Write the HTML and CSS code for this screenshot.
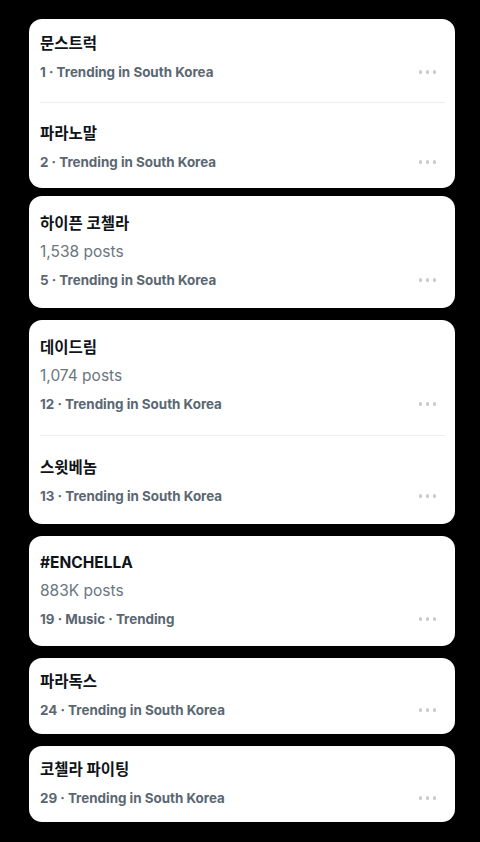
FILE: index.html
```html
<!DOCTYPE html>
<html lang="ko">

<head>
  <meta charset="UTF-8">
  <meta name="viewport" content="width=device-width, initial-scale=1.0">
  <title>Trends</title>
  <link rel="stylesheet" href="styles.css">
</head>

<body>
  <div class="trend-list">

    <div class="card pair">
      <div class="trend">
        <div class="trend-title">문스트럭</div>
        <div class="trend-meta">
          <span>1 · Trending in South Korea</span>
          <span class="more"><i></i><i></i><i></i></span>
        </div>
      </div>
      <div class="trend">
        <div class="trend-title">파라노말</div>
        <div class="trend-meta">
          <span>2 · Trending in South Korea</span>
          <span class="more"><i></i><i></i><i></i></span>
        </div>
      </div>
    </div>

    <div class="card">
      <div class="trend">
        <div class="trend-title">하이픈 코첼라</div>
        <div class="trend-posts">1,538 posts</div>
        <div class="trend-meta">
          <span>5 · Trending in South Korea</span>
          <span class="more"><i></i><i></i><i></i></span>
        </div>
      </div>
    </div>

    <div class="card loose">
      <div class="trend">
        <div class="trend-title">데이드림</div>
        <div class="trend-posts">1,074 posts</div>
        <div class="trend-meta">
          <span>12 · Trending in South Korea</span>
          <span class="more"><i></i><i></i><i></i></span>
        </div>
      </div>
      <div class="trend">
        <div class="trend-title">스윗베놈</div>
        <div class="trend-meta">
          <span>13 · Trending in South Korea</span>
          <span class="more"><i></i><i></i><i></i></span>
        </div>
      </div>
    </div>

    <div class="card snug">
      <div class="trend">
        <div class="trend-title">#ENCHELLA</div>
        <div class="trend-posts">883K posts</div>
        <div class="trend-meta">
          <span>19 · Music · Trending</span>
          <span class="more"><i></i><i></i><i></i></span>
        </div>
      </div>
    </div>

    <div class="card compact">
      <div class="trend">
        <div class="trend-title">파라독스</div>
        <div class="trend-meta">
          <span>24 · Trending in South Korea</span>
          <span class="more"><i></i><i></i><i></i></span>
        </div>
      </div>
    </div>

    <div class="card compact">
      <div class="trend">
        <div class="trend-title">코첼라 파이팅</div>
        <div class="trend-meta">
          <span>29 · Trending in South Korea</span>
          <span class="more"><i></i><i></i><i></i></span>
        </div>
      </div>
    </div>

  </div>
</body>

</html>
```

FILE: styles.css
```css
body {
  margin: 0;
  background-color: #000;
  font-family: Inter, "Noto Sans CJK KR", sans-serif;
  color: #0f1419;
}

.trend-list {
  display: flex;
  flex-direction: column;
  gap: 12px;
  padding: 19px 25px 0 29px;
}

.card {
  background: #fff;
  border-radius: 13px;
  padding: 0 10px 0 11px;
}

.trend {
  display: flex;
  flex-direction: column;
  gap: 8px;
  padding: 18px 0;
}

.trend + .trend {
  border-top: 1px solid #eceff1;
}

/* first card sits a little closer to the next one */
.card.pair {
  margin-bottom: -4px;
}

.card.pair .trend:first-child {
  padding: 15px 0 20px;
}

.card.pair .trend + .trend {
  padding: 21px 0 16px;
}

.card.loose .trend:first-child {
  padding-bottom: 21px;
}

.card.loose .trend + .trend {
  padding-top: 22px;
}

.card.snug .trend {
  padding: 17px 0;
}

.card.compact .trend {
  padding: 14px 0;
}

.trend-title {
  font-size: 15.5px;
  font-weight: 700;
  line-height: 20px;
}

.trend-posts {
  font-size: 15.5px;
  line-height: 20px;
  color: #6b7680;
}

.trend-meta {
  display: flex;
  justify-content: space-between;
  align-items: center;
  font-size: 13.4px;
  font-weight: 700;
  line-height: 20px;
  color: #5a6772;
}

.more {
  display: flex;
  gap: 3.5px;
  margin-right: 9px;
}

.more i {
  width: 3.5px;
  height: 3.5px;
  border-radius: 50%;
  background: #c6cbcf;
}
```
